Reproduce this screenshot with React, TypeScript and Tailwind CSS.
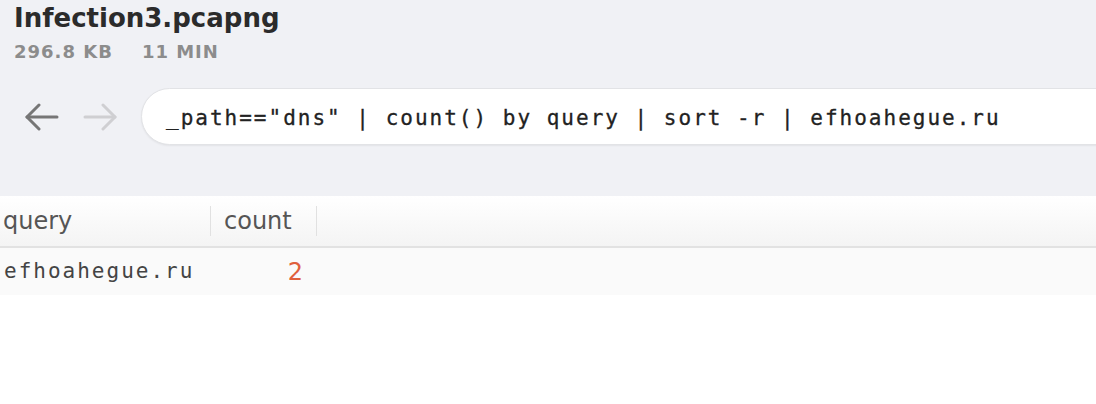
import React from 'react';

const columns = [
  { name: 'query', width: 211 },
  { name: 'count', width: 106 },
];

const rows = [{ query: 'efhoahegue.ru', count: 2 }];

function Arrow({ dir, color }: { dir: 'left' | 'right'; color: string }) {
  return (
    <svg width="34" height="28" viewBox="0 0 34 28" fill="none">
      <g
        stroke={color}
        strokeWidth="3"
        strokeLinecap="round"
        strokeLinejoin="round"
        transform={dir === 'right' ? 'translate(34 0) scale(-1 1)' : undefined}
      >
        <path d="M2 14H32" />
        <path d="M14 2L2 14L14 26" />
      </g>
    </svg>
  );
}

export default function App() {
  return (
    <div className="w-[1096px] h-[404px] overflow-hidden bg-white font-['DejaVu_Sans',sans-serif]">
      {/* Header */}
      <div className="bg-[#f0f1f5] h-[196px]">
        <div className="pl-[14px] pt-[2px]">
          <h1 className="text-[26px] leading-[32px] font-bold text-[#2b2b2b]">Infection3.pcapng</h1>
          <div className="mt-[7px] flex text-[18px] leading-[22px] font-bold tracking-[1px] text-[#8c8c8c]">
            <span>296.8 KB</span>
            <span className="ml-[29px]">11 MIN</span>
          </div>
        </div>

        {/* Search */}
        <div className="mt-[25px] flex items-center">
          <div className="flex items-center gap-[24px] pl-[25px] pr-[24px]">
            <Arrow dir="left" color="#767676" />
            <Arrow dir="right" color="#cfcfd2" />
          </div>
          <div className="flex-1 -mr-[60px] h-[57px] flex items-center bg-white rounded-full border border-[#e2e3e6] shadow-[0_1px_2px_rgba(0,0,0,0.06)] pl-[24px] pt-[4px]">
            <span className="font-['DejaVu_Sans_Mono',monospace] text-[21px] tracking-[2px] text-[#222] whitespace-pre [-webkit-text-stroke:0.3px_#222]">
              _path=="dns" | count() by query | sort -r | efhoahegue.ru
            </span>
          </div>
        </div>
      </div>

      {/* Table */}
      <div className="flex h-[52px] items-center bg-gradient-to-b from-white to-[#f4f4f4] border-b-2 border-[#e2e2e2]">
        {columns.map((col, i) => (
          <div
            key={col.name}
            className={`h-[30px] flex items-center border-r border-[#e1e1e1] text-[24px] text-[#555] ${
              i === 0 ? 'pl-[3px]' : 'pl-[13px]'
            }`}
            style={{ width: col.width }}
          >
            {col.name}
          </div>
        ))}
      </div>
      {rows.map((row) => (
        <div key={row.query} className="flex h-[47px] items-center bg-[#fafafa] pt-[1px]">
          <div className="w-[211px] pl-[4px] font-['DejaVu_Sans_Mono',monospace] text-[21px] tracking-[2px] text-[#444]">
            {row.query}
          </div>
          <div className="w-[106px] pr-[14px] text-right text-[24px] text-[#e0603c]">{row.count}</div>
        </div>
      ))}
    </div>
  );
}
